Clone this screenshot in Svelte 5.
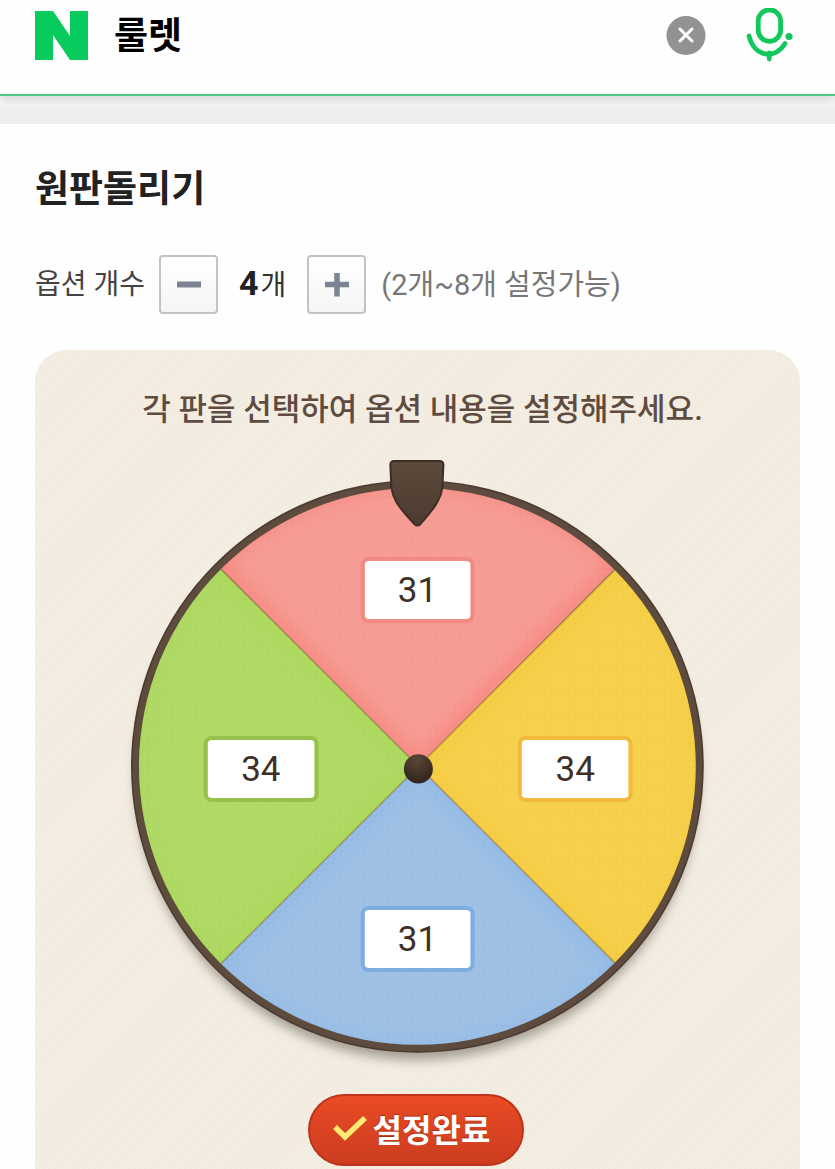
<script>
  let query = $state('룰렛');
  let count = $state(4);

  const slices = $state([
    { side: 'top', value: '31' },
    { side: 'right', value: '34' },
    { side: 'bottom', value: '31' },
    { side: 'left', value: '34' }
  ]);

  const step = (by) => (count = Math.min(8, Math.max(2, count + by)));
</script>

<div class="page">
  <header>
    <a class="logo" href="#top" aria-label="NAVER">
      <svg viewBox="0 0 54 49" width="54" height="49">
        <path d="M1 0H19L36 25V0H54V49H36L19 24V49H1Z" fill="#07cc5d" />
      </svg>
    </a>
    <input class="query" type="text" aria-label="검색어" bind:value={query} />
    <button class="icon" type="button" aria-label="지우기" onclick={() => (query = '')}>
      <svg viewBox="0 0 40 40" width="40" height="40">
        <circle cx="20" cy="19.5" r="19.5" fill="#929294" />
        <path d="M14 13L26 25M26 13L14 25" stroke="#fff" stroke-width="3" stroke-linecap="round" />
      </svg>
    </button>
    <button class="icon" type="button" aria-label="음성검색">
      <svg viewBox="0 0 48 56" width="48" height="56" fill="none" stroke="#12c75b" stroke-width="4.8" stroke-linecap="round">
        <rect x="12.2" y="1.800" width="22.4" height="31.500" rx="11.2" />
        <path d="M3 28C8 49 29 52 39 35.500" />
        <path d="M23.300 45V51" />
        <circle cx="43" cy="28.500" r="3.600" fill="#12c75b" stroke="none" />
      </svg>
    </button>
  </header>
  <div class="band"></div>

  <main>
    <h1>원판돌리기</h1>

    <div class="options">
      <span class="label" id="count-label">옵션 개수</span>
      <button class="step" type="button" aria-label="줄이기" onclick={() => step(-1)}>
        <svg viewBox="0 0 24 24" width="24" height="24"><path d="M0 11.500H24" stroke="#7c8394" stroke-width="6" /></svg>
      </button>
      <output aria-labelledby="count-label"><b>{count}</b>개</output>
      <button class="step" type="button" aria-label="늘리기" onclick={() => step(1)}>
        <svg viewBox="0 0 24 24" width="24" height="24"><path d="M0 11.500H24M12 0V23.500" stroke="#7c8394" stroke-width="5.500" /></svg>
      </button>
      <span class="range">(2개~8개 설정가능)</span>
    </div>

    <section class="panel">
      <p>각 판을 선택하여 옵션 내용을 설정해주세요.</p>

      <div class="wheel">
        <svg class="disc" viewBox="0 0 573 573" aria-hidden="true">
          <defs>
            <clipPath id="face"><circle cx="286" cy="286" r="278" /></clipPath>
            <clipPath id="pink"><path d="M287 286L0 -1H572Z" /></clipPath>
            <clipPath id="yellow"><path d="M287 286L572 0V572Z" /></clipPath>
            <clipPath id="blue"><path d="M287 286L572 572H0Z" /></clipPath>
            <clipPath id="green"><path d="M287 286L0 0V572Z" /></clipPath>
            <filter id="soft" x="-20%" y="-20%" width="140%" height="140%"><feGaussianBlur stdDeviation="9" /></filter>
            <filter id="shade" x="-20%" y="-20%" width="140%" height="140%"><feGaussianBlur stdDeviation="6" /></filter>
            <pattern id="grain" width="6" height="6" patternUnits="userSpaceOnUse">
              <circle cx="2" cy="2" r="1.200" fill="#fff" opacity=".04" />
              <circle cx="5" cy="5" r="1.200" fill="#777" opacity=".04" />
            </pattern>
            <radialGradient id="hub" cx=".45" cy=".2" r=".8">
              <stop offset="0" stop-color="#5a4739" /><stop offset="1" stop-color="#30231b" />
            </radialGradient>
            <linearGradient id="pin" x1="0" y1="0" x2="0" y2="1">
              <stop offset="0" stop-color="#5c4a3b" /><stop offset="1" stop-color="#4c3b2f" />
            </linearGradient>
          </defs>

          <circle cx="286" cy="298" r="281" fill="#6c665c" opacity=".6" filter="url(#shade)" />
          <circle cx="286" cy="286" r="286" fill="#4a3a2f" />
          <circle cx="286" cy="286" r="284.500" fill="#5d4b3d" />
          <g clip-path="url(#face)">
            <g clip-path="url(#pink)">
              <rect width="572" height="572" fill="#f69c94" />
              <path d="M287 286L84 83A286 286 0 0 1 488 83Z" fill="none" stroke="#f9776f" stroke-width="12" opacity=".75" filter="url(#soft)" />
            </g>
            <g clip-path="url(#yellow)">
              <rect width="572" height="572" fill="#f6d14c" />
              <path d="M287 286L488 84A286 286 0 0 1 488 488Z" fill="none" stroke="#f6c52d" stroke-width="12" opacity=".6" filter="url(#soft)" />
            </g>
            <g clip-path="url(#blue)">
              <rect width="572" height="572" fill="#9ec0e5" />
              <path d="M287 286L488 488A286 286 0 0 1 84 488Z" fill="none" stroke="#82b3ea" stroke-width="12" opacity=".6" filter="url(#soft)" />
            </g>
            <g clip-path="url(#green)">
              <rect width="572" height="572" fill="#b0d966" />
              <path d="M287 286L84 488A286 286 0 0 1 84 84Z" fill="none" stroke="#a7da4c" stroke-width="12" opacity=".6" filter="url(#soft)" />
            </g>
            <rect width="572" height="572" fill="url(#grain)" />
            <path d="M80 79L494 493M494 79L80 493" stroke="#8d7445" stroke-width="1.500" opacity=".55" />
          </g>
          <circle cx="287" cy="288.500" r="14.500" fill="url(#hub)" />
          <path d="M263 -19H308Q312 -19 312 -15L311 7Q310 15 306 22Q303 28 289 44Q286 47 283 44Q269 29 265 22Q261 15 260 7L259 -15Q259 -19 263 -19Z" fill="url(#pin)" stroke="#3c2e24" stroke-width="2" />
        </svg>
        {#each slices as slice, i}
          <input class={slice.side} type="text" aria-label={`옵션 ${i + 1}`} bind:value={slice.value} />
        {/each}
      </div>

      <button class="done" type="button">
        <svg viewBox="0 0 34 26" width="34" height="26"><path d="M2 12L12 22L32 3" fill="none" stroke="#ffec70" stroke-width="5.500" /></svg>
        설정완료
      </button>
    </section>
  </main>
</div>

<style>
  :global(body) { margin: 0; background: #fefefe; }
  .page {
    display: flex;
    flex-direction: column;
    min-height: 100vh;
    font-family: Roboto, "Noto Sans CJK KR", sans-serif;
    color: #222;
  }
  button, input { box-sizing: border-box; margin: 0; padding: 0; border: 0; font-family: inherit; }
  button { display: flex; align-items: center; justify-content: center; background: none; cursor: pointer; }
  svg { display: block; }

  header {
    display: flex;
    align-items: center;
    box-sizing: border-box;
    height: 96px;
    padding: 0 41px 23px 34px;
    border-bottom: 2px solid #49c982;
    background: #fefefe;
    box-shadow: 0 5px 8px rgba(0, 0, 0, .1);
    z-index: 1;
  }
  .query {
    flex: 1;
    min-width: 0;
    margin: 2px 0 0 26px;
    background: none;
    color: #000;
    font-size: 37px;
    font-weight: 700;
    line-height: 48px;
  }
  .icon { flex: none; margin-left: 40px; }
  .band { height: 28px; background: linear-gradient(#f5f5f6 0 11px, #eeeef0 11px); }

  main { display: flex; flex: 1; flex-direction: column; padding: 38px 35px 0; }
  h1 { margin: 0; font-size: 37px; line-height: 56px; font-weight: 700; }
  .options {
    display: flex;
    align-items: center;
    margin: 37px 0 36px;
    font-size: 28px;
    line-height: 44px;
    color: #444;
    white-space: nowrap;
  }
  .step {
    flex: none;
    width: 59px;
    height: 59px;
    border: 2px solid #c0c4c9;
    border-radius: 4px;
    background: linear-gradient(#fff, #f5f5f6);
  }
  .label { margin-right: 14px; }
  output { margin: 0 21px; color: #333; }
  output b { margin-right: 2px; font-size: 34px; color: #222; }
  .range { margin-left: 15px; font-size: 29px; color: #777; }

  .panel {
    display: flex;
    flex: 1;
    flex-direction: column;
    align-items: center;
    padding: 37px 0 3px;
    border-radius: 32px 32px 0 0;
    background: repeating-linear-gradient(135deg, #f2ebdf 0 2px, #f4eee2 2px 4px);
  }
  p { margin: 0 0 0 10px; font-size: 31px; font-weight: 500; line-height: 46px; color: #5f4b3f; }
  .wheel { position: relative; width: 75%; margin-top: 47px; aspect-ratio: 1; }
  .disc { width: 100%; overflow: visible; }
  .wheel input {
    position: absolute;
    width: 20%;
    height: 66px;
    border: 4px solid;
    border-radius: 8px;
    background: #fff;
    background-clip: padding-box;
    color: #402f27;
    font-size: 35px;
    text-align: center;
    transform: translate(-50%, -50%);
  }
  .wheel .top { left: 50%; top: 19.2%; border-color: #f18a83; }
  .wheel .right { left: 77.5%; top: 50.4%; border-color: #f2ba3c; }
  .wheel .bottom { left: 50%; top: 80%; border-color: #7eaee0; }
  .wheel .left { left: 22.7%; top: 50.4%; border-color: #98c14b; }

  .done {
    gap: 6px;
    width: 216px;
    height: 72px;
    margin: 40px 4px 0 0;
    padding: 0 8px 4px 0;
    border: 2px solid #bd341a;
    border-radius: 36px;
    background: linear-gradient(#e94b25, #cc3d20);
    color: #fff;
    font-size: 32px;
    font-weight: 700;
    text-shadow: 0 -1px 1px rgba(130, 30, 10, .6);
    white-space: nowrap;
  }
</style>
